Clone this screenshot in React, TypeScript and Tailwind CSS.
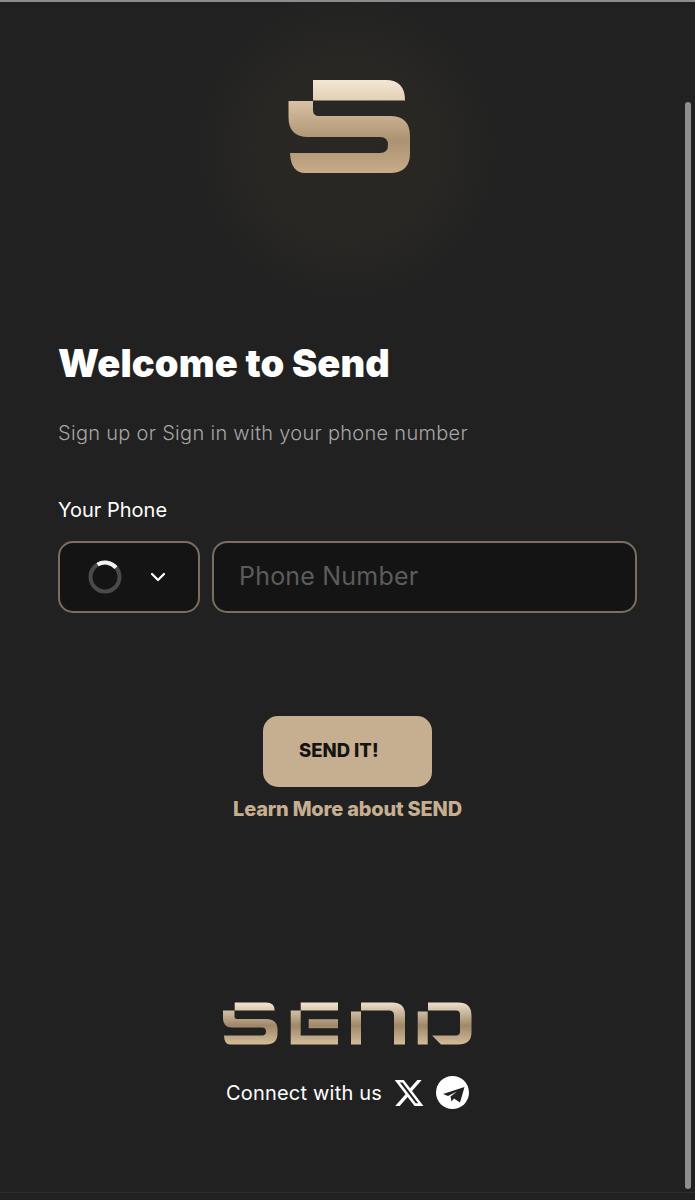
import React from "react";
import { ChevronDown } from "lucide-react";

const font = { fontFamily: "Inter, 'Liberation Sans', sans-serif" };

function LogoMark() {
  return (
    <svg width="122" height="93" viewBox="288 80 122 93" className="block">
      <defs>
        <linearGradient id="markTop" x1="0" y1="80" x2="0" y2="101" gradientUnits="userSpaceOnUse">
          <stop offset="0" stopColor="#f3e7d6" />
          <stop offset="1" stopColor="#e2cfb4" />
        </linearGradient>
        <linearGradient id="markBody" x1="0" y1="101" x2="0" y2="173" gradientUnits="userSpaceOnUse">
          <stop offset="0" stopColor="#d8c2a2" />
          <stop offset="0.55" stopColor="#ab9272" />
          <stop offset="1" stopColor="#c8ac88" />
        </linearGradient>
      </defs>
      <path d="M313 80H386Q405 80 405 100.5H313Z" fill="url(#markTop)" />
      <path
        d="M288.5 101H313V110Q313 116 319 116H390Q410 116 410 136V153Q410 173 390 173H305Q291 173 290 153H380Q388 153 388 145Q388 137 380 137H308Q288.5 137 288.5 117Z"
        fill="url(#markBody)"
      />
    </svg>
  );
}

function Wordmark() {
  return (
    <svg width="250" height="43" viewBox="223 1001.5 250 43" className="block">
      <defs>
        <linearGradient id="wordTop" x1="0" y1="1002" x2="0" y2="1010" gradientUnits="userSpaceOnUse">
          <stop offset="0" stopColor="#f0e4d2" />
          <stop offset="1" stopColor="#dcc8ab" />
        </linearGradient>
        <linearGradient id="wordBody" x1="0" y1="1002" x2="0" y2="1044" gradientUnits="userSpaceOnUse">
          <stop offset="0" stopColor="#ecdfca" />
          <stop offset="0.55" stopColor="#a08768" />
          <stop offset="1" stopColor="#d4bb9a" />
        </linearGradient>
      </defs>
      {/* S */}
      <path d="M234.7 1002H266Q274.7 1002 274.7 1010H234.7Z" fill="url(#wordTop)" />
      <path
        d="M223 1010H234.5V1016Q234.5 1018.5 237 1018.5H266Q277.5 1018.5 277.5 1029V1033Q277.5 1044 266 1044H230Q224 1044 224 1035H262Q266 1035 266 1031Q266 1027 262 1027H232Q223 1027 223 1018Z"
        fill="url(#wordBody)"
      />
      {/* E */}
      <rect x="300.7" y="1002" width="37.3" height="8" fill="url(#wordTop)" />
      <path d="M290.7 1010H300.7V1035H338V1044H290.7Z" fill="url(#wordBody)" />
      <rect x="308.7" y="1018.7" width="29.3" height="9" fill="url(#wordBody)" />
      {/* N */}
      <rect x="351" y="1011" width="10" height="33" fill="url(#wordBody)" />
      <path d="M361 1002H392Q405 1002 405 1014V1044H394V1015Q394 1010 389 1010H361Z" fill="url(#wordBody)" />
      {/* D */}
      <rect x="417.7" y="1011" width="10" height="33" fill="url(#wordBody)" />
      <path
        d="M428 1002H458Q471.5 1002 471.5 1015V1032Q471.5 1044 458 1044H441L432 1035H456Q460 1035 460 1031V1014Q460 1010 456 1010H428Z"
        fill="url(#wordBody)"
      />
    </svg>
  );
}

function Spinner() {
  return (
    <svg width="34" height="34" viewBox="0 0 34 34">
      <circle cx="17" cy="17" r="14.5" fill="none" stroke="#4a4a4a" strokeWidth="4" />
      <path d="M9.5 4.6A14.5 14.5 0 0 1 28 7.6" fill="none" stroke="#f2f2f2" strokeWidth="4" />
    </svg>
  );
}

function XIcon() {
  return (
    <svg width="32" height="32" viewBox="0 0 24 24" fill="#ffffff">
      <path d="M18.244 2.25h3.308l-7.227 8.26 8.502 11.24H16.17l-5.214-6.817L4.99 21.75H1.68l7.73-8.835L1.254 2.25H8.08l4.713 6.231zm-1.161 17.52h1.833L7.084 4.126H5.117z" />
    </svg>
  );
}

function TelegramIcon() {
  return (
    <svg width="33" height="33" viewBox="0 0 33 33">
      <circle cx="16.5" cy="16.5" r="16.5" fill="#ffffff" />
      <path d="M7 18L28.5 11L24 26.5L18 22.5L15.5 25.5L14.5 20.5L21 15.5L12 20Z" fill="#212121" />
    </svg>
  );
}

export default function App() {
  return (
    <div className="relative h-[1200px] w-[695px] overflow-hidden bg-[#212121] text-white" style={font}>
      <div className="h-[2px] bg-[#8c8c8c]" />
      <div className="absolute left-[177px] top-[2px] h-[296px] w-[340px] bg-[radial-gradient(circle_at_center,#292825_0%,#282724_40%,#212121_70%)]" />
      <div className="absolute bottom-[7px] left-0 h-px w-full bg-[#2c2c2c]" />
      <div className="absolute left-[685px] top-[102px] h-[1087px] w-[6px] rounded-full bg-[#8f8f8f]" />

      <div className="relative flex flex-col">
        <div className="ml-[3px] mt-[78px] flex justify-center">
          <LogoMark />
        </div>

        <div className="px-[58px]">
          <h1 className="mt-[168px] text-[38px] font-black leading-[44px] tracking-[0.1px]">Welcome to Send</h1>
          <p className="mt-[34px] text-[20px] font-light leading-[28px] tracking-[0.3px] text-[#a6a6a6]">
            Sign up or Sign in with your phone number
          </p>
          <p className="mt-[49px] text-[20px] leading-[28px]">Your Phone</p>
          <div className="mt-[17px] flex gap-3">
            <button className="flex h-[72px] w-[142px] items-center rounded-[15px] border-2 border-[#7a6e5e] bg-[#141414] pl-[28px]">
              <Spinner />
              <ChevronDown className="ml-[24px] h-6 w-6 text-white" strokeWidth={2.25} />
            </button>
            <div className="flex h-[72px] flex-1 items-center rounded-[15px] border-2 border-[#7a6e5e] bg-[#141414] pl-[25px] text-[25px] tracking-[0.2px] text-[#5c5c5c]">
              Phone Number
            </div>
          </div>
        </div>

        <div className="flex flex-col items-center">
          <button className="mt-[103px] flex h-[71px] w-[169px] items-center rounded-[15px] bg-[#c6ae91] pb-[2px] pl-[36px] text-[18.5px] font-extrabold text-[#161412]">
            SEND IT!
          </button>
          <p className="mt-[8px] text-[20px] font-extrabold leading-[28px] tracking-[-0.2px] text-[#c6ae91]">
            Learn More about SEND
          </p>
          <div className="mt-[179px]">
            <Wordmark />
          </div>
          <div className="mt-[31px] flex h-[33px] items-center">
            <span className="text-[20px] leading-[28px] tracking-[0.2px]">Connect with us</span>
            <span className="ml-[11px]">
              <XIcon />
            </span>
            <span className="ml-[11px]">
              <TelegramIcon />
            </span>
          </div>
        </div>
      </div>
    </div>
  );
}
